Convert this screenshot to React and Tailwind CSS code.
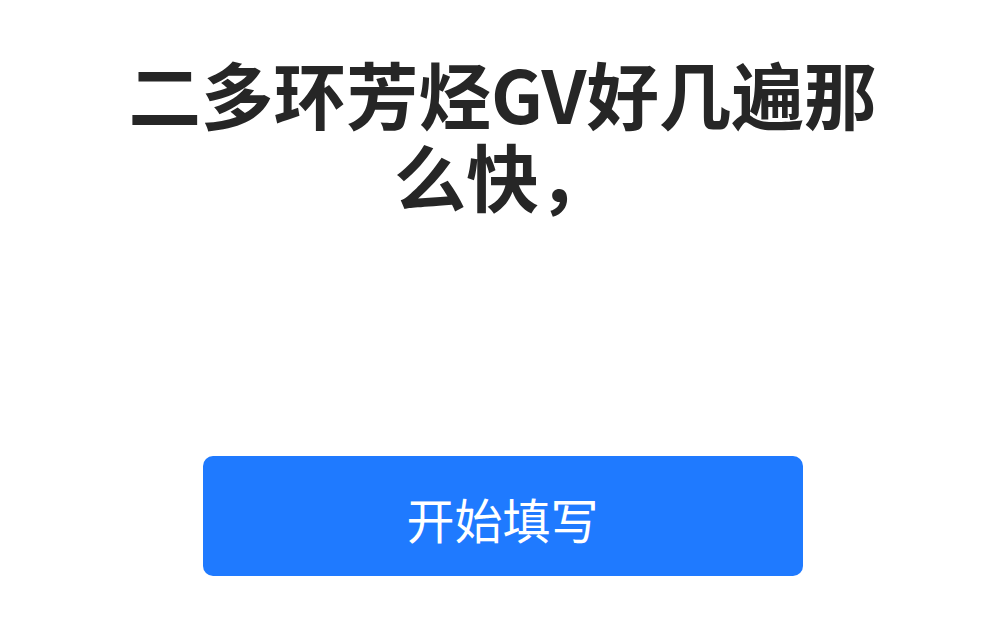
export default function App() {
  return (
    <div
      className="flex min-h-[624px] w-full flex-col items-center bg-white pt-[52px]"
      style={{ fontFamily: '"Noto Sans CJK SC", "Noto Sans", sans-serif' }}
    >
      <h1 className="w-[780px] text-center text-[72.5px] font-bold leading-[82px] text-[#262626]">
        二多环芳烃GV好几遍那么快，
      </h1>
      <button className="mt-[240px] flex h-[120px] w-[600px] items-center justify-center rounded-[10px] bg-[#1f7aff] pt-[4px] text-[48px] text-white">
        开始填写
      </button>
    </div>
  );
}
